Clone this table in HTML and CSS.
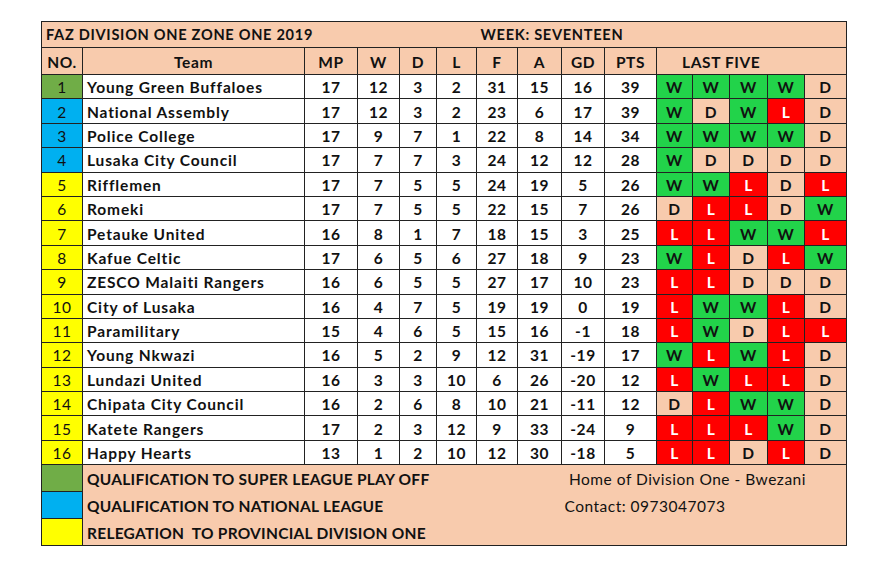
FILE: index.html
```html
<!DOCTYPE html>
<html>
<head>
<meta charset="utf-8">
<link rel="stylesheet" href="styles.css">
</head>
<body>
<table class="league">
  <colgroup>
    <col class="c-no"><col class="c-team"><col class="c-mp"><col class="c-w"><col class="c-d"><col class="c-l"><col class="c-f"><col class="c-a"><col class="c-gd"><col class="c-pts"><col class="c-r1"><col class="c-r2"><col class="c-r3"><col class="c-r4"><col class="c-r5">
  </colgroup>
  <tr class="title-row">
    <td colspan="6" class="title">FAZ DIVISION ONE ZONE ONE 2019</td>
    <td colspan="9" class="week">WEEK: SEVENTEEN</td>
  </tr>
  <tr class="head-row">
    <th>NO.</th><th>Team</th><th>MP</th><th>W</th><th>D</th><th>L</th><th>F</th><th>A</th><th>GD</th><th>PTS</th>
    <th colspan="5" class="last5">LAST FIVE</th>
  </tr>
  <tr><td class="no g">1</td><td class="team">Young Green Buffaloes</td><td>17</td><td>12</td><td>3</td><td>2</td><td>31</td><td>15</td><td>16</td><td>39</td><td class="w">W</td><td class="w">W</td><td class="w">W</td><td class="w">W</td><td class="d">D</td></tr>
  <tr><td class="no b">2</td><td class="team">National Assembly</td><td>17</td><td>12</td><td>3</td><td>2</td><td>23</td><td>6</td><td>17</td><td>39</td><td class="w">W</td><td class="d">D</td><td class="w">W</td><td class="l">L</td><td class="d">D</td></tr>
  <tr><td class="no b">3</td><td class="team">Police College</td><td>17</td><td>9</td><td>7</td><td>1</td><td>22</td><td>8</td><td>14</td><td>34</td><td class="w">W</td><td class="w">W</td><td class="w">W</td><td class="w">W</td><td class="d">D</td></tr>
  <tr><td class="no b">4</td><td class="team">Lusaka City Council</td><td>17</td><td>7</td><td>7</td><td>3</td><td>24</td><td>12</td><td>12</td><td>28</td><td class="w">W</td><td class="d">D</td><td class="d">D</td><td class="d">D</td><td class="d">D</td></tr>
  <tr><td class="no y">5</td><td class="team">Rifflemen</td><td>17</td><td>7</td><td>5</td><td>5</td><td>24</td><td>19</td><td>5</td><td>26</td><td class="w">W</td><td class="w">W</td><td class="l">L</td><td class="d">D</td><td class="l">L</td></tr>
  <tr><td class="no y">6</td><td class="team">Romeki</td><td>17</td><td>7</td><td>5</td><td>5</td><td>22</td><td>15</td><td>7</td><td>26</td><td class="d">D</td><td class="l">L</td><td class="l">L</td><td class="d">D</td><td class="w">W</td></tr>
  <tr><td class="no y">7</td><td class="team">Petauke United</td><td>16</td><td>8</td><td>1</td><td>7</td><td>18</td><td>15</td><td>3</td><td>25</td><td class="l">L</td><td class="l">L</td><td class="w">W</td><td class="w">W</td><td class="l">L</td></tr>
  <tr><td class="no y">8</td><td class="team">Kafue Celtic</td><td>17</td><td>6</td><td>5</td><td>6</td><td>27</td><td>18</td><td>9</td><td>23</td><td class="w">W</td><td class="l">L</td><td class="d">D</td><td class="l">L</td><td class="w">W</td></tr>
  <tr><td class="no y">9</td><td class="team">ZESCO Malaiti Rangers</td><td>16</td><td>6</td><td>5</td><td>5</td><td>27</td><td>17</td><td>10</td><td>23</td><td class="l">L</td><td class="l">L</td><td class="d">D</td><td class="d">D</td><td class="d">D</td></tr>
  <tr><td class="no y">10</td><td class="team">City of Lusaka</td><td>16</td><td>4</td><td>7</td><td>5</td><td>19</td><td>19</td><td>0</td><td>19</td><td class="l">L</td><td class="w">W</td><td class="w">W</td><td class="l">L</td><td class="d">D</td></tr>
  <tr><td class="no y">11</td><td class="team">Paramilitary</td><td>15</td><td>4</td><td>6</td><td>5</td><td>15</td><td>16</td><td>-1</td><td>18</td><td class="l">L</td><td class="w">W</td><td class="d">D</td><td class="l">L</td><td class="l">L</td></tr>
  <tr><td class="no y">12</td><td class="team">Young Nkwazi</td><td>16</td><td>5</td><td>2</td><td>9</td><td>12</td><td>31</td><td>-19</td><td>17</td><td class="w">W</td><td class="l">L</td><td class="w">W</td><td class="l">L</td><td class="d">D</td></tr>
  <tr><td class="no y">13</td><td class="team">Lundazi United</td><td>16</td><td>3</td><td>3</td><td>10</td><td>6</td><td>26</td><td>-20</td><td>12</td><td class="l">L</td><td class="w">W</td><td class="l">L</td><td class="l">L</td><td class="d">D</td></tr>
  <tr><td class="no y">14</td><td class="team">Chipata City Council</td><td>16</td><td>2</td><td>6</td><td>8</td><td>10</td><td>21</td><td>-11</td><td>12</td><td class="d">D</td><td class="l">L</td><td class="w">W</td><td class="w">W</td><td class="d">D</td></tr>
  <tr><td class="no y">15</td><td class="team">Katete Rangers</td><td>17</td><td>2</td><td>3</td><td>12</td><td>9</td><td>33</td><td>-24</td><td>9</td><td class="l">L</td><td class="l">L</td><td class="l">L</td><td class="w">W</td><td class="d">D</td></tr>
  <tr><td class="no y">16</td><td class="team">Happy Hearts</td><td>13</td><td>1</td><td>2</td><td>10</td><td>12</td><td>30</td><td>-18</td><td>5</td><td class="l">L</td><td class="l">L</td><td class="d">D</td><td class="l">L</td><td class="d">D</td></tr>
  <tr class="legend-row">
    <td class="key g"></td>
    <td colspan="7" class="legend-text">QUALIFICATION TO SUPER LEAGUE PLAY OFF</td>
    <td colspan="7" class="info">&nbsp;Home of Division One - Bwezani</td>
  </tr>
  <tr class="legend-row">
    <td class="key b"></td>
    <td colspan="7" class="legend-text">QUALIFICATION TO NATIONAL LEAGUE</td>
    <td colspan="7" class="info">Contact: 0973047073</td>
  </tr>
  <tr class="legend-row last">
    <td class="key y"></td>
    <td colspan="7" class="legend-text">RELEGATION&nbsp; TO PROVINCIAL DIVISION ONE</td>
    <td colspan="7" class="info"></td>
  </tr>
</table>
</body>
</html>
```

FILE: styles.css
```css
html, body {
  margin: 0;
  padding: 0;
  background: #ffffff;
}

body {
  padding: 21px 0 0 41px;
  font-family: Lato, "Liberation Sans", sans-serif;
  color: #111;
}

.league {
  border-collapse: collapse;
  table-layout: fixed;
  width: 805px;
  border: 1.5px solid #222;
}

.c-no { width: 41px; }
.c-team { width: 222px; }
.c-mp { width: 53px; }
.c-w { width: 42px; }
.c-d { width: 37px; }
.c-l { width: 40px; }
.c-f { width: 41px; }
.c-a { width: 44px; }
.c-gd { width: 43px; }
.c-pts { width: 52px; }
.c-r1 { width: 36px; }
.c-r2 { width: 37px; }
.c-r3 { width: 38px; }
.c-r4 { width: 37px; }
.c-r5 { width: 42px; }

.league td,
.league th {
  border: 1px solid #222;
  padding: 1px 0 0 0;
  text-align: center;
  vertical-align: middle;
  font-size: 15.5px;
  font-weight: 700;
  letter-spacing: 0.6px;
  line-height: 18px;
  white-space: nowrap;
  overflow: hidden;
  background: #ffffff;
}

.league tr {
  height: 24.4px;
}

.league .title-row {
  height: 26px;
}

.title-row td {
  background: #f8cbad;
  text-align: left;
  font-size: 14.6px;
  letter-spacing: 0.7px;
  border-left: none;
  border-right: none;
}

.title-row .title {
  padding-left: 4px;
  border-left: 1.5px solid #222;
}

.title-row .week {
  padding-left: 4px;
  border-right: 1.5px solid #222;
}

.league .head-row {
  height: 27px;
}

.head-row th {
  background: #f8cbad;
}

.head-row .last5 {
  text-align: left;
  padding-left: 25px;
}

.league td.team {
  text-align: left;
  padding-left: 4px;
  letter-spacing: 0.85px;
}

.league td.no {
  font-weight: 400;
}

.g { background: #70ad47 !important; }
.b { background: #00b0f0 !important; }
.y { background: #ffff00 !important; }

.league td.w { background: #22d34a; color: #111; }
.league td.l { background: #ff0000; color: #ffffff; }
.league td.d { background: #f8cbad; color: #111; }

.league .legend-row {
  height: 27px;
}

.legend-row td.legend-text,
.legend-row td.info {
  background: #f8cbad;
  text-align: left;
  border-top: none;
  border-bottom: none;
  border-left: none;
  border-right: none;
}

.legend-row td.legend-text {
  padding-left: 4px;
  letter-spacing: 0.25px;
  border-left: 1px solid #222;
}

.legend-row td.info {
  font-weight: 400;
  letter-spacing: 0.5px;
  padding-left: 3px;
  border-right: 1.5px solid #222;
}

.legend-row.last td.legend-text,
.legend-row.last td.info {
  border-bottom: 1.5px solid #222;
}

.legend-row td.key {
  border: 1px solid #222;
}
```
